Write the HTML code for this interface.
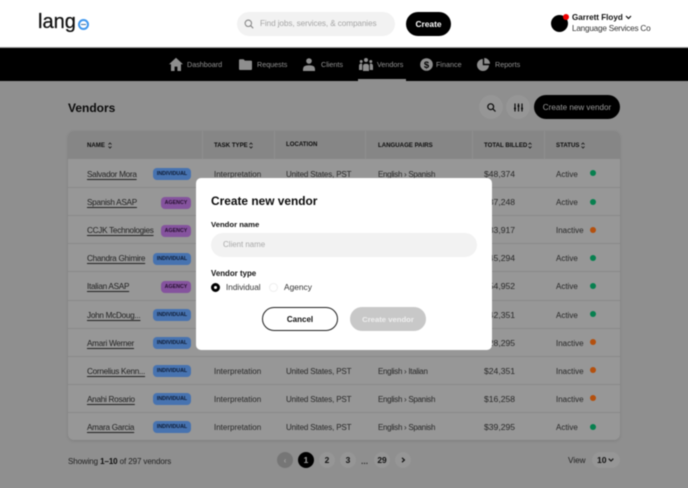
<!DOCTYPE html>
<html><head><meta charset="utf-8">
<style>
*{box-sizing:border-box;margin:0;padding:0}
html,body{width:688px;height:488px;overflow:hidden;background:#8f8f8f;font-family:"Liberation Sans",sans-serif}
body{position:relative}
.t{position:absolute;white-space:nowrap;line-height:14px}
.a{position:absolute}
#root{position:absolute;left:0;top:0;width:688px;height:488px;filter:blur(.4px)}
.line{position:absolute;left:68px;width:552px;height:1px;background:#898989}
.n{font-size:8.2px;color:#222;left:87px;text-decoration:underline;text-underline-offset:1.5px;letter-spacing:-.28px;margin-top:1px}
.c{font-size:8px;color:#282828;margin-top:1px}
.u{letter-spacing:-.15px}.e{letter-spacing:-.3px}.m{font-size:8.6px;margin-top:0}
.b{position:absolute;height:12px;border-radius:4px;font-size:5.3px;font-weight:bold;text-align:center;line-height:13px;margin-top:.5px}
.ind{left:153px;width:38px;background:#4773b0;color:#0d1a33}
.ag{left:161px;width:30px;background:#85539e;color:#25102f}
.d{position:absolute;left:590px;width:6px;height:6px;border-radius:50%}
.g{background:#07804f}.o{background:#b4500e}
.h{font-size:6.1px;font-weight:bold;color:#0c0c0c;margin-top:1px}
.nav{font-size:7.2px;color:#929292}
.pg{position:absolute;top:452px;width:16px;height:16px;border-radius:50%;background:#969696;text-align:center;line-height:16px;font-size:8.4px;font-weight:bold;color:#111}
.s{position:absolute;top:142px}
</style></head><body><div id="root">
<div class="a" style="left:-6px;top:-6px;width:700px;height:500px;background:#8f8f8f"></div>
<div class="a" style="left:-6px;top:-6px;width:700px;height:54px;background:#fff"></div>
<div class="a" style="left:-6px;top:47px;width:700px;height:1px;background:#9a9a9a"></div>
<div class="t" style="left:38px;top:8px;font-size:20px;line-height:28px;color:#111;-webkit-text-stroke:.25px #111">lang</div>
<div class="a" style="left:78px;top:19px;width:11px;height:11px;border-radius:50%;border:2.2px solid #3f97ee"></div>
<div class="a" style="left:81px;top:24px;width:5px;height:1px;background:#3f6f9f"></div>
<div class="a" style="left:237px;top:12px;width:158px;height:24px;border-radius:12px;background:#f2f2f2"></div>
<svg class="a" style="left:244px;top:19px" width="10" height="10" viewBox="0 0 10 10" fill="none" stroke="#888" stroke-width="1.1"><circle cx="4.3" cy="4.3" r="3.2"/><path d="M6.7 6.7L9.2 9.2"/></svg>
<div class="t" style="left:260px;top:17px;font-size:8.2px;letter-spacing:-.1px;color:#a6a6a6">Find jobs, services, &amp; companies</div>
<div class="a" style="left:406px;top:12px;width:45px;height:24px;border-radius:12px;background:#000;color:#fff;font-size:8.4px;font-weight:bold;text-align:center;line-height:24px">Create</div>
<div class="a" style="left:551px;top:15px;width:17px;height:17px;border-radius:50%;background:#000"></div>
<div class="a" style="left:563px;top:14px;width:6px;height:6px;border-radius:50%;background:#f00000"></div>
<div class="t" style="left:572px;top:11px;font-size:8.1px;font-weight:bold;color:#111">Garrett Floyd</div>
<svg class="a" style="left:625px;top:15px" width="7" height="5" viewBox="0 0 7 5" fill="none" stroke="#111" stroke-width="1.2"><path d="M1 1l2.5 2.5L6 1"/></svg>
<div class="t" style="left:572px;top:22px;font-size:8.2px;letter-spacing:-.22px;color:#333">Language Services Co</div>

<div class="a" style="left:-6px;top:48px;width:700px;height:33px;background:#000"></div>
<svg class="a" style="left:169px;top:57px" width="14" height="14" viewBox="0 0 14 14" fill="#8e8e8e"><path d="M7 .8L0 7.2h2V14h3.6V9.6h2.8V14H12V7.2h2z"/></svg>
<div class="t nav" style="left:187px;top:58px">Dashboard</div>
<svg class="a" style="left:239px;top:59px" width="13" height="11" viewBox="0 0 13 11" fill="#8e8e8e"><path d="M0 1.2Q0 .3 1 .3h3.6l1.3 1.3H12q1 0 1 1V10q0 1-1 1H1q-1 0-1-1z"/></svg>
<div class="t nav" style="left:257px;top:58px">Requests</div>
<svg class="a" style="left:303px;top:58px" width="12" height="13" viewBox="0 0 12 13" fill="#8e8e8e"><circle cx="6" cy="3" r="2.8"/><path d="M0 13v-2.2Q0 7.3 6 7.3t6 3.5V13z"/></svg>
<div class="t nav" style="left:321px;top:58px">Clients</div>
<svg class="a" style="left:359px;top:58px" width="14" height="13" viewBox="0 0 14 13" fill="#8e8e8e"><circle cx="7" cy="2" r="2"/><circle cx="2.2" cy="3.5" r="1.5"/><circle cx="11.8" cy="3.5" r="1.5"/><path d="M4 13V8q0-2.300 3-2.300T10 8v5zM0 12V8q0-2.500 2.500-2.500L3.200 6V12zM14 12V8q0-2.500-2.500-2.500L10.800 6V12z"/></svg>
<div class="t nav" style="left:377px;top:58px">Vendors</div>
<div class="a" style="left:358px;top:79px;width:48px;height:2px;background:#8e8e8e"></div>
<svg class="a" style="left:420px;top:58px" width="13" height="13" viewBox="0 0 13 13"><circle cx="6.500" cy="6.500" r="6.300" fill="#8e8e8e"/><text x="6.500" y="10" font-size="9.500" font-weight="bold" text-anchor="middle" font-family="Liberation Sans" fill="#000">$</text></svg>
<div class="t nav" style="left:436px;top:58px">Finance</div>
<svg class="a" style="left:477px;top:58px" width="13" height="13" viewBox="0 0 13 13" fill="#8e8e8e"><path d="M5.800 1A6 6 0 1 0 12 7.300H5.800z"/><path d="M7.200 0A5.800 5.800 0 0 1 13 5.800H7.200z"/></svg>
<div class="t nav" style="left:495px;top:58px">Reports</div>

<div class="t" style="left:68px;top:101px;font-size:12px;font-weight:bold;color:#0b0b0b">Vendors</div>
<div class="a" style="left:479px;top:95px;width:24px;height:24px;border-radius:50%;background:#969696"></div>
<svg class="a" style="left:487px;top:103px" width="9" height="9" viewBox="0 0 9 9" fill="none" stroke="#0a0a0a" stroke-width="1.200"><circle cx="3.700" cy="3.700" r="2.900"/><path d="M5.900 5.900L8.500 8.500"/></svg>
<div class="a" style="left:506px;top:95px;width:24px;height:24px;border-radius:50%;background:#969696"></div>
<svg class="a" style="left:514px;top:103px" width="9" height="9" viewBox="0 0 9 9" fill="none" stroke="#0a0a0a" stroke-width="1.200"><path d="M1 .5v8M4.500 .5v8M8 .5v8"/><path d="M0 5.500h2M3.500 3h2M7 5.500h2" stroke-width="1.500"/></svg>
<div class="a" style="left:534px;top:95px;width:86px;height:24px;border-radius:12px;background:#000;color:#999;font-size:8.100px;text-align:center;line-height:26px">Create new vendor</div>

<div class="a" style="left:68px;top:131px;width:552px;height:309px;border-radius:6px;background:#979797;box-shadow:0 1px 3px rgba(0,0,0,.12);overflow:hidden">
<div class="a" style="left:0;top:0;width:552px;height:28px;background:#868686"></div>
<div class="a" style="left:134px;top:0;width:1px;height:28px;background:#8f8f8f"></div>
<div class="a" style="left:206px;top:0;width:1px;height:28px;background:#8f8f8f"></div>
<div class="a" style="left:297px;top:0;width:1px;height:28px;background:#8f8f8f"></div>
<div class="a" style="left:404px;top:0;width:1px;height:28px;background:#8f8f8f"></div>
<div class="a" style="left:476px;top:0;width:1px;height:28px;background:#8f8f8f"></div>
</div>
<div class="t h" style="left:87px;top:138px">NAME</div>
<div class="t h" style="left:214px;top:138px">TASK TYPE</div>
<div class="t h" style="left:286px;top:137px">LOCATION</div>
<div class="t h" style="left:378px;top:138px">LANGUAGE PAIRS</div>
<div class="t h" style="left:484px;top:138px">TOTAL BILLED</div>
<div class="t h" style="left:556px;top:138px">STATUS</div>
<svg class="s" style="left:108px" width="4" height="7" viewBox="0 0 4 7" fill="none" stroke="#111" stroke-width=".8"><path d="M.5 2.500L2 1l1.500 1.500M.5 4.500L2 6l1.500-1.500"/></svg>
<svg class="s" style="left:249px" width="4" height="7" viewBox="0 0 4 7" fill="none" stroke="#111" stroke-width=".8"><path d="M.5 2.500L2 1l1.500 1.500M.5 4.500L2 6l1.500-1.500"/></svg>
<svg class="s" style="left:528px" width="4" height="7" viewBox="0 0 4 7" fill="none" stroke="#111" stroke-width=".8"><path d="M.5 2.500L2 1l1.500 1.500M.5 4.500L2 6l1.500-1.500"/></svg>
<svg class="s" style="left:581px" width="4" height="7" viewBox="0 0 4 7" fill="none" stroke="#111" stroke-width=".8"><path d="M.5 2.500L2 1l1.500 1.500M.5 4.500L2 6l1.500-1.500"/></svg>

<div class="line" style="top:187px"></div><div class="line" style="top:215px"></div><div class="line" style="top:243px"></div><div class="line" style="top:271px"></div><div class="line" style="top:300px"></div><div class="line" style="top:328px"></div><div class="line" style="top:356px"></div><div class="line" style="top:384px"></div><div class="line" style="top:412px"></div>

<div class="t n" style="top:167px">Salvador Mora</div><div class="b ind" style="top:167px">INDIVIDUAL</div>
<div class="t n" style="top:195px">Spanish ASAP</div><div class="b ag" style="top:196px">AGENCY</div>
<div class="t n" style="top:223px">CCJK Technologies</div><div class="b ag" style="top:224px">AGENCY</div>
<div class="t n" style="top:251px">Chandra Ghimire</div><div class="b ind" style="top:252px">INDIVIDUAL</div>
<div class="t n" style="top:279px">Italian ASAP</div><div class="b ag" style="top:280px">AGENCY</div>
<div class="t n" style="top:308px">John McDoug...</div><div class="b ind" style="top:308px">INDIVIDUAL</div>
<div class="t n" style="top:336px">Amari Werner</div><div class="b ind" style="top:336px">INDIVIDUAL</div>
<div class="t n" style="top:364px">Cornelius Kenn...</div><div class="b ind" style="top:364px">INDIVIDUAL</div>
<div class="t n" style="top:392px">Anahi Rosario</div><div class="b ind" style="top:392px">INDIVIDUAL</div>
<div class="t n" style="top:420px">Amara Garcia</div><div class="b ind" style="top:420px">INDIVIDUAL</div>

<div class="t c" style="left:214px;top:167px">Interpretation</div><div class="t c u" style="left:286px;top:167px">United States, PST</div><div class="t c e" style="left:378px;top:167px">English › Spanish</div>
<div class="t c" style="left:214px;top:364px">Interpretation</div><div class="t c u" style="left:286px;top:364px">United States, PST</div><div class="t c e" style="left:378px;top:364px">English › Italian</div>
<div class="t c" style="left:214px;top:392px">Interpretation</div><div class="t c u" style="left:286px;top:392px">United States, PST</div><div class="t c e" style="left:378px;top:392px">English › Spanish</div>
<div class="t c" style="left:214px;top:420px">Interpretation</div><div class="t c u" style="left:286px;top:420px">United States, PST</div><div class="t c e" style="left:378px;top:420px">English › Spanish</div>

<div class="t c m" style="left:484px;top:167px">$48,374</div><div class="t c" style="left:556px;top:167px">Active</div><div class="d g" style="top:170px"></div>
<div class="t c m" style="left:484px;top:195px">$37,248</div><div class="t c" style="left:556px;top:195px">Active</div><div class="d g" style="top:199px"></div>
<div class="t c m" style="left:484px;top:223px">$83,917</div><div class="t c" style="left:556px;top:223px">Inactive</div><div class="d o" style="top:227px"></div>
<div class="t c m" style="left:484px;top:251px">$45,294</div><div class="t c" style="left:556px;top:251px">Active</div><div class="d g" style="top:255px"></div>
<div class="t c m" style="left:484px;top:279px">$54,952</div><div class="t c" style="left:556px;top:279px">Active</div><div class="d g" style="top:283px"></div>
<div class="t c m" style="left:484px;top:308px">$42,351</div><div class="t c" style="left:556px;top:308px">Active</div><div class="d g" style="top:311px"></div>
<div class="t c m" style="left:484px;top:336px">$28,295</div><div class="t c" style="left:556px;top:336px">Inactive</div><div class="d o" style="top:339px"></div>
<div class="t c m" style="left:484px;top:364px">$24,351</div><div class="t c" style="left:556px;top:364px">Inactive</div><div class="d o" style="top:367px"></div>
<div class="t c m" style="left:484px;top:392px">$16,258</div><div class="t c" style="left:556px;top:392px">Inactive</div><div class="d o" style="top:395px"></div>
<div class="t c m" style="left:484px;top:420px">$39,295</div><div class="t c" style="left:556px;top:420px">Active</div><div class="d g" style="top:424px"></div>

<div class="t" style="left:68px;top:455px;font-size:8px;letter-spacing:-.1px;color:#222">Showing <b style="color:#0c0c0c">1–10</b> of 297 vendors</div>
<div class="pg" style="left:277px;background:#767676;color:#a0a0a0">‹</div>
<div class="pg" style="left:298px;background:#000;color:#a0a0a0">1</div>
<div class="pg" style="left:319px">2</div>
<div class="pg" style="left:340px">3</div>
<div class="t" style="left:361px;top:454px;font-size:8.500px;font-weight:bold;color:#333">...</div>
<div class="pg" style="left:374px">29</div>
<div class="pg" style="left:395px"></div>
<svg class="a" style="left:401px;top:457px" width="5" height="6" viewBox="0 0 5 6" fill="none" stroke="#111" stroke-width="1.200"><path d="M1 .8L3.400 3 1 5.200"/></svg>
<div class="t" style="left:568px;top:454px;font-size:8.200px;color:#222">View</div>
<div class="a" style="left:592px;top:452px;width:28px;height:16px;border-radius:8px;background:#969696"></div>
<div class="t" style="left:597px;top:453px;font-size:8.600px;font-weight:bold;color:#111">10</div>
<svg class="a" style="left:608px;top:458px" width="6" height="4" viewBox="0 0 6 4" fill="none" stroke="#111" stroke-width="1.100"><path d="M.7.7L3 3 5.300.7"/></svg>

<div class="a" style="left:196px;top:178px;width:296px;height:172px;border-radius:5px;background:#fff"></div>
<div class="t" style="left:211px;top:194px;font-size:11.900px;font-weight:bold;color:#0b0b0b">Create new vendor</div>
<div class="t" style="left:211px;top:218px;font-size:7.700px;font-weight:bold;color:#111">Vendor name</div>
<div class="a" style="left:211px;top:233px;width:266px;height:24px;border-radius:12px;background:#f2f2f2"></div>
<div class="t" style="left:223px;top:238px;font-size:7.900px;color:#a9a9a9">Client name</div>
<div class="t" style="left:211px;top:267px;font-size:7.900px;font-weight:bold;color:#111">Vendor type</div>
<div class="a" style="left:211px;top:283px;width:9px;height:9px;border-radius:50%;border:3.200px solid #000;background:#fff"></div>
<div class="t" style="left:226px;top:281px;font-size:8.200px;color:#333">Individual</div>
<div class="a" style="left:269px;top:283px;width:9px;height:9px;border-radius:50%;border:1px solid #eee;background:#fff"></div>
<div class="t" style="left:284px;top:280px;font-size:8.400px;color:#333">Agency</div>
<div class="a" style="left:262px;top:307px;width:76px;height:24px;border-radius:12px;border:1px solid #222;background:#fff;color:#111;font-size:8px;font-weight:bold;text-align:center;line-height:23px">Cancel</div>
<div class="a" style="left:350px;top:307px;width:76px;height:24px;border-radius:12px;background:#c8c8c8;color:#eee;font-size:7.700px;font-weight:bold;text-align:center;line-height:25px">Create vendor</div>
</div></body></html>
